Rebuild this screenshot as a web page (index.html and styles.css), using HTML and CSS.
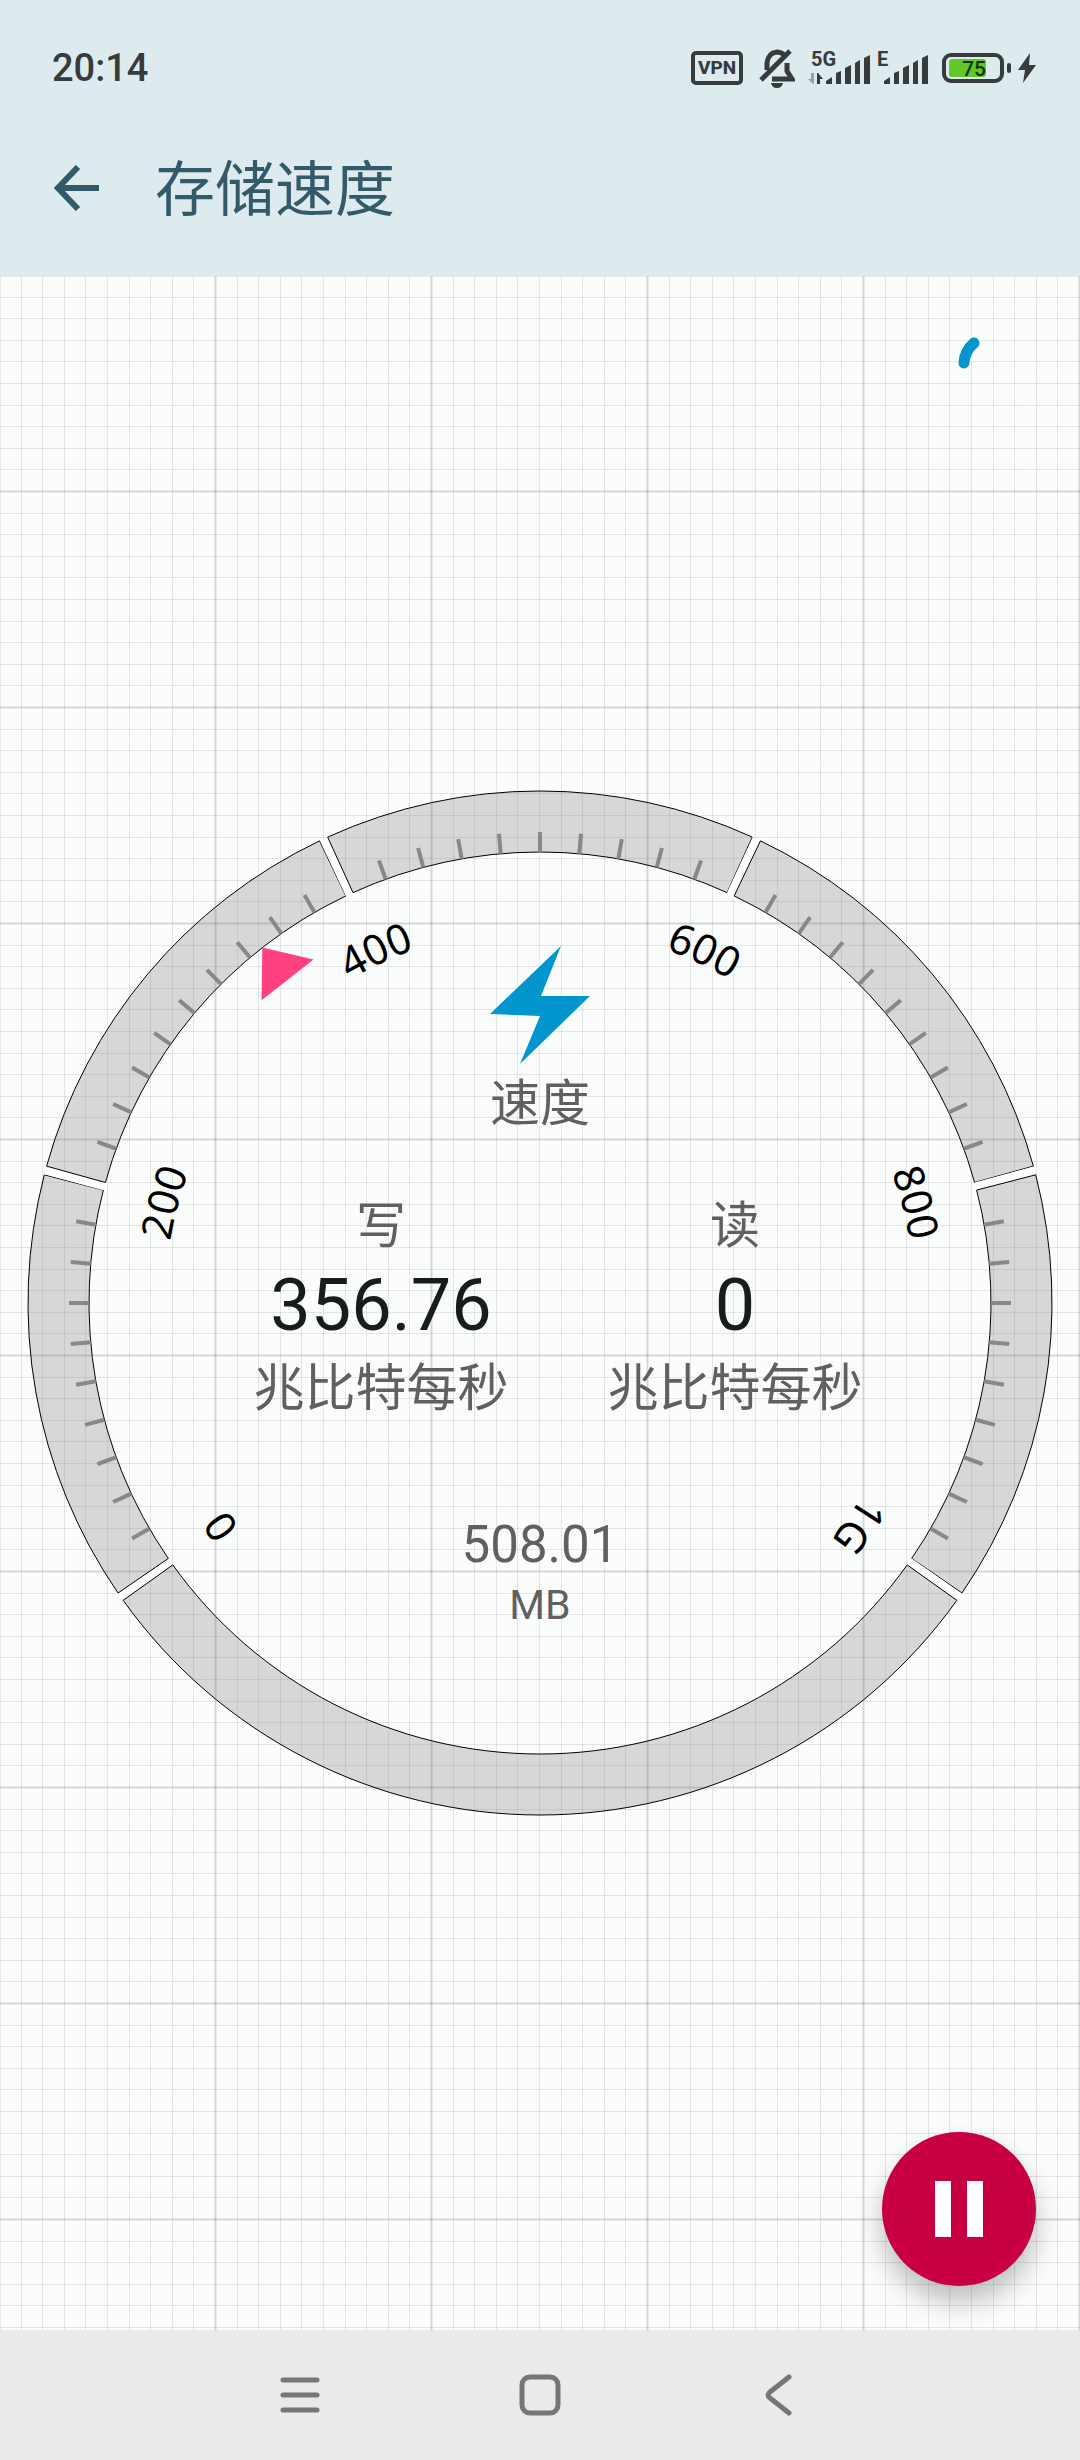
FILE: index.html
```html
<!DOCTYPE html>
<html lang="zh-CN">
<head>
  <meta charset="utf-8">
  <meta name="viewport" content="width=device-width, initial-scale=1">
  <title>存储速度</title>
  <link rel="stylesheet" href="styles.css">
</head>
<body>
  <div class="status-bar">
    <span class="clock">20:14</span>
    <div class="status-icons">
      <span class="vpn">VPN</span>
      <svg class="bell" width="36" height="40" viewBox="0 0 36 40">
        <path d="M8 22V15Q9 5 18 4Q22 4 25 7M28 15V23L33 31H13" fill="none" stroke="#373b3c" stroke-width="5"/>
        <path d="M2 32L31 3" stroke="#373b3c" stroke-width="5"/>
        <path d="M12 35h12q-1 5-6 5t-6-5z" fill="#373b3c"/>
      </svg>
      <div class="signal">
        <span class="net">5G</span>
        <svg width="64" height="34" viewBox="0 0 64 34">
          <path d="M4 22h3v11h-1l-5-5h3z" fill="#9aa3a6"/>
          <path d="M10 22h1l5 6h-3v5h-3z" fill="#373b3c"/>
          <path d="M19 33v-3l6-4v7zM29 33V22l5-2v13zM38 33V17l6-3v19zM48 33V12l5-3v24zM57 33V7l6-3v29z" fill="#373b3c"/>
        </svg>
      </div>
      <div class="signal signal-e">
        <span class="net">E</span>
        <svg width="52" height="34" viewBox="0 0 52 34">
          <path d="M7 33v-3l6-4v7zM17 33V22l5-2v13zM26 33V17l6-3v19zM36 33V12l5-3v24zM45 33V7l6-3v29z" fill="#373b3c"/>
        </svg>
      </div>
      <div class="battery"><span class="level">75</span></div>
      <svg class="charge" width="18" height="30" viewBox="0 0 18 30">
        <path d="M12 0L0 17h7L5 30 18 12h-7z" fill="#373b3c"/>
      </svg>
    </div>
  </div>

  <header class="app-bar">
    <button class="back" aria-label="返回">
      <svg width="46" height="46" viewBox="0 0 46 46">
        <path d="M24 2L4 23L24 44M4 23H45" fill="none" stroke="#345a69" stroke-width="6"/>
      </svg>
    </button>
    <h1>存储速度</h1>
  </header>

  <main>
    <svg class="spinner" width="72" height="72" viewBox="0 0 72 72">
      <path d="M18 12A28 28 0 0 0 8 32" fill="none" stroke="#0396ce" stroke-width="11" stroke-linecap="round"/>
    </svg>

    <div class="gauge">
      <svg class="dial" viewBox="-540 -540 1080 1080">
        <defs>
          <path id="labelArc" d="M0 375A375 375 0 0 1 0 -375A375 375 0 0 1 0 375"/>
        </defs>
        <g id="segments"></g>
        <g id="ticks"></g>
        <g id="labels"></g>
        <path d="M0 -451L33 -410H-33Z" fill="#ff4081" transform="rotate(-38)"/>
      </svg>

      <div class="readout">
        <svg class="bolt" width="100" height="118" viewBox="0 0 100 118">
          <path d="M71 0L0 68L50 70L30 118L100 50H51Z" fill="#0396ce"/>
        </svg>
        <div class="label">速度</div>
        <div class="speeds">
          <div class="speed">
            <div class="label">写</div>
            <div class="value">356.76</div>
            <div class="unit">兆比特每秒</div>
          </div>
          <div class="speed">
            <div class="label">读</div>
            <div class="value">0</div>
            <div class="unit">兆比特每秒</div>
          </div>
        </div>
        <div class="total">508.01</div>
        <div class="total-unit">MB</div>
      </div>
    </div>

    <button class="fab" aria-label="暂停">
      <svg width="48" height="56" viewBox="0 0 48 56">
        <path d="M0 0h16v56H0zM32 0h16v56H32z" fill="#fff"/>
      </svg>
    </button>
  </main>

  <nav class="nav-bar">
    <button aria-label="最近任务">
      <svg width="42" height="42" viewBox="0 0 42 42">
        <path d="M4 6H38M4 21H38M4 36H38" stroke="#767676" stroke-width="5" stroke-linecap="round"/>
      </svg>
    </button>
    <button aria-label="主屏幕">
      <svg width="42" height="42" viewBox="0 0 42 42">
        <rect x="3" y="3" width="36" height="36" rx="8" fill="none" stroke="#767676" stroke-width="5"/>
      </svg>
    </button>
    <button aria-label="返回上一页">
      <svg width="42" height="42" viewBox="0 0 42 42">
        <path d="M30 3L11 18Q7 21 11 24L30 39" fill="none" stroke="#767676" stroke-width="5" stroke-linecap="round"/>
      </svg>
    </button>
  </nav>

  <script src="gauge.js"></script>
</body>
</html>
```
FILE: styles.css
```css
* {
  box-sizing: border-box;
}
body {
  display: flex;
  flex-direction: column;
  min-height: 100vh;
  margin: 0;
  font-family: Roboto, "Noto Sans CJK SC", sans-serif;
  background-color: #fbfdfc;
}
button {
  display: flex;
  align-items: center;
  justify-content: center;
  padding: 0;
  border: none;
  background: none;
  cursor: pointer;
}
svg {
  display: block;
  flex-shrink: 0;
}

/* status bar */
.status-bar {
  display: flex;
  align-items: center;
  justify-content: space-between;
  height: 100px;
  padding: 36px 44px 0 52px;
  background-color: #ddeaee;
  color: #373b3c;
}
.clock {
  font-size: 38px;
  font-weight: 500;
}
.status-icons {
  display: flex;
  align-items: center;
}
.vpn {
  width: 52px;
  height: 34px;
  margin-right: 16px;
  border: 4px solid #373b3c;
  border-radius: 5px;
  font-size: 19px;
  font-weight: 800;
  line-height: 26px;
  text-align: center;
}
.bell {
  margin-right: 12px;
}
.signal {
  position: relative;
  margin-right: 6px;
}
.signal-e {
  margin-right: 13px;
}
.net {
  position: absolute;
  top: -2px;
  left: 4px;
  font-size: 20px;
  font-weight: 700;
  line-height: 20px;
}
.signal-e .net {
  left: 0;
}
.battery {
  position: relative;
  width: 62px;
  height: 30px;
  margin-right: 14px;
  padding: 3px;
  border: 4px solid #373b3c;
  border-radius: 9px;
}
.battery::after {
  content: '';
  position: absolute;
  top: 6px;
  right: -11px;
  width: 4px;
  height: 10px;
  border-radius: 2px;
  background-color: #373b3c;
}
.level {
  display: block;
  width: 37px;
  height: 18px;
  margin-top: -1px;
  border-radius: 3px;
  background-color: #62c829;
  color: #17330b;
  font-size: 21px;
  font-weight: 500;
  line-height: 20px;
  text-align: right;
}

/* app bar */
.app-bar {
  display: flex;
  align-items: center;
  height: 176px;
  padding: 0 54px;
  background-color: #ddeaee;
}
.back {
  margin-right: 55px;
}
h1 {
  margin: 0;
  padding-top: 6px;
  color: #345a69;
  font-size: 60px;
  font-weight: 400;
  line-height: 80px;
}

/* graph paper behind the gauge, 50 cells across */
main {
  position: relative;
  flex: 1;
  display: flex;
  align-items: center;
  justify-content: center;
  background-image:
    repeating-linear-gradient(to right, rgba(0, 0, 0, 0.07) 0 1px, transparent 1px calc(20vw - 2px), rgba(0, 0, 0, 0.07) calc(20vw - 2px) 20vw),
    repeating-linear-gradient(to bottom, rgba(0, 0, 0, 0.07) 0 1px, transparent 1px calc(20vw - 2px), rgba(0, 0, 0, 0.07) calc(20vw - 2px) 20vw),
    repeating-linear-gradient(to right, transparent 0 calc(2vw - 1px), rgba(0, 0, 0, 0.09) calc(2vw - 1px) 2vw),
    repeating-linear-gradient(to bottom, transparent 0 calc(2vw - 1px), rgba(0, 0, 0, 0.09) calc(2vw - 1px) 2vw);
}
.spinner {
  position: absolute;
  top: 55px;
  right: 52px;
}
.gauge {
  display: grid;
  width: 100%;
}
.dial,
.readout {
  grid-area: 1 / 1;
}
.dial {
  width: 100%;
}
.segment {
  fill: #808080;
  fill-opacity: 0.3;
  stroke: #000;
  stroke-width: 1;
}
.gap {
  stroke: #fff;
  stroke-width: 8;
}
.tick {
  stroke: #888;
  stroke-width: 4;
}
.dial-label {
  font-family: "Noto Sans", sans-serif;
  font-size: 42px;
  text-anchor: middle;
}

/* numbers in the middle */
.readout {
  display: flex;
  flex-direction: column;
  align-items: center;
  padding-top: 183px;
  color: #5f6060;
  text-align: center;
}
.bolt {
  margin-bottom: 10px;
}
.label {
  font-size: 50px;
  line-height: 60px;
}
.speeds {
  display: flex;
  gap: 98px;
  margin: 62px 0 93px;
  padding-left: 36px;
}
.speed {
  width: 256px;
}
.value {
  color: #191c1d;
  font-size: 72px;
  line-height: 100px;
}
.unit {
  font-size: 51px;
  line-height: 66px;
}
.total {
  font-size: 51px;
  line-height: 60px;
}
.total-unit {
  font-size: 41px;
  line-height: 60px;
}

.fab {
  position: absolute;
  right: 44px;
  bottom: 44px;
  width: 154px;
  height: 154px;
  border-radius: 50%;
  background-color: #c80041;
  box-shadow: 0 16px 28px rgba(0, 0, 0, 0.25);
}

/* system navigation */
.nav-bar {
  display: flex;
  justify-content: center;
  height: 130px;
  background-color: #eaeaea;
}
.nav-bar button {
  width: 240px;
}
```
FILE: gauge.js
```js
const NS = 'http://www.w3.org/2000/svg';
const OUTER = 512;
const INNER = 451;
const bounds = [-125, -75, -25, 25, 75, 125, 235];
const labels = ['0', '200', '400', '600', '800', '1G'];

function point(r, deg) {
  const a = deg * Math.PI / 180;
  return (r * Math.sin(a)).toFixed(2) + ' ' + (-r * Math.cos(a)).toFixed(2);
}

function add(parent, tag, attrs) {
  const el = document.createElementNS(NS, tag);
  for (const key in attrs) el.setAttribute(key, attrs[key]);
  parent.appendChild(el);
  return el;
}

const segments = document.getElementById('segments');
for (let i = 0; i < bounds.length - 1; i++) {
  const from = bounds[i] + 0.5;
  const to = bounds[i + 1] - 0.5;
  add(segments, 'path', {
    class: 'gap',
    d: `M${point(INNER, bounds[i])}L${point(OUTER, bounds[i])}`
  });
  add(segments, 'path', {
    class: 'segment',
    d: `M${point(OUTER, from)}A${OUTER} ${OUTER} 0 0 1 ${point(OUTER, to)}` +
       `L${point(INNER, to)}A${INNER} ${INNER} 0 0 0 ${point(INNER, from)}Z`
  });
}

// a tick every 5 degrees, none where two segments meet
const ticks = document.getElementById('ticks');
for (let deg = -120; deg <= 120; deg += 5) {
  if (bounds.includes(deg)) continue;
  add(ticks, 'path', { class: 'tick', d: `M${point(451, deg)}L${point(471, deg)}` });
}

// the arc starts at the bottom, so the top of the dial is half way along it
const labelGroup = document.getElementById('labels');
labels.forEach((text, i) => {
  const el = add(labelGroup, 'text', { class: 'dial-label' });
  const tp = add(el, 'textPath', {
    href: '#labelArc',
    startOffset: ((bounds[i] + 180) / 360 * 100) + '%'
  });
  tp.textContent = text;
});
```
